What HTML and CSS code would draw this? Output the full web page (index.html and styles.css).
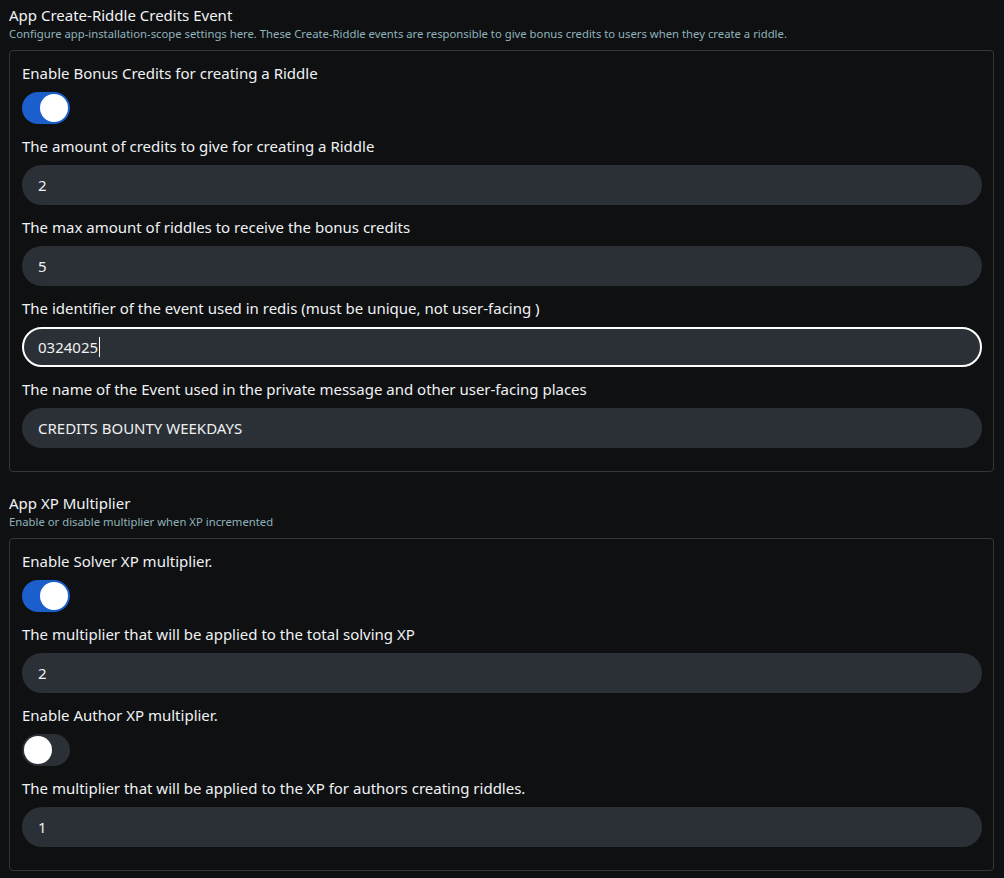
FILE: index.html
```html
<!DOCTYPE html>
<html>
<head>
<meta charset="utf-8">
<link rel="stylesheet" href="styles.css">
</head>
<body>
<section class="group">
  <h2 class="group-title">App Create-Riddle Credits Event</h2>
  <p class="group-desc">Configure app-installation-scope settings here. These Create-Riddle events are responsible to give bonus credits to users when they create a riddle.</p>
  <div class="card">
    <div class="field">
      <label class="label">Enable Bonus Credits for creating a Riddle</label>
      <div class="toggle on"><span class="knob"></span></div>
    </div>
    <div class="field">
      <label class="label">The amount of credits to give for creating a Riddle</label>
      <div class="input">2</div>
    </div>
    <div class="field">
      <label class="label">The max amount of riddles to receive the bonus credits</label>
      <div class="input">5</div>
    </div>
    <div class="field">
      <label class="label">The identifier of the event used in redis (must be unique, not user-facing )</label>
      <div class="input focused">0324025<span class="caret"></span></div>
    </div>
    <div class="field">
      <label class="label">The name of the Event used in the private message and other user-facing places</label>
      <div class="input">CREDITS BOUNTY WEEKDAYS</div>
    </div>
  </div>
</section>
<section class="group second">
  <h2 class="group-title">App XP Multiplier</h2>
  <p class="group-desc">Enable or disable multiplier when XP incremented</p>
  <div class="card">
    <div class="field">
      <label class="label">Enable Solver XP multiplier.</label>
      <div class="toggle on"><span class="knob"></span></div>
    </div>
    <div class="field">
      <label class="label">The multiplier that will be applied to the total solving XP</label>
      <div class="input">2</div>
    </div>
    <div class="field">
      <label class="label">Enable Author XP multiplier.</label>
      <div class="toggle"><span class="knob"></span></div>
    </div>
    <div class="field">
      <label class="label">The multiplier that will be applied to the XP for authors creating riddles.</label>
      <div class="input">1</div>
    </div>
  </div>
</section>
</body>
</html>
```
FILE: styles.css
```css
html, body {
  margin: 0;
  padding: 0;
  background: #0f1012;
}
body {
  font-family: "Noto Sans", "Open Sans", sans-serif;
  color: #eef0f2;
  padding: 4px 10px 0 9px;
}
.group-title {
  margin: 0;
  font-size: 15px;
  font-weight: 400;
  line-height: 22px;
  color: #f2f3f5;
}
.group-desc {
  margin: 0;
  font-size: 11.3px;
  line-height: 16px;
  color: #8fb3bb;
}
.second {
  margin-top: 20px;
}
.card {
  margin-top: 8px;
  border: 1px solid #34373a;
  border-radius: 4px;
  padding: 11px 11px 23px 12px;
  display: flex;
  flex-direction: column;
  gap: 11px;
}
.field {
  display: flex;
  flex-direction: column;
  gap: 8px;
}
.label {
  font-size: 15px;
  line-height: 22px;
  color: #f0f2f4;
}
.toggle {
  width: 48px;
  height: 32px;
  border-radius: 16px;
  background: #2a3035;
  display: flex;
  align-items: center;
  padding: 0 2px;
  box-sizing: border-box;
}
.toggle.on {
  background: #1a5fcc;
  justify-content: flex-end;
}
.knob {
  width: 28px;
  height: 28px;
  border-radius: 50%;
  background: #ffffff;
}
.input {
  height: 40px;
  border-radius: 20px;
  background: #2a3035;
  padding: 0 16px;
  display: flex;
  align-items: center;
  font-size: 15px;
  color: #eef0f2;
  box-sizing: border-box;
}
.input.focused {
  border: 2px solid #ffffff;
  padding-left: 14px;
}
.caret {
  display: inline-block;
  width: 1px;
  height: 20px;
  background: #ffffff;
  margin-left: 1px;
}
```
